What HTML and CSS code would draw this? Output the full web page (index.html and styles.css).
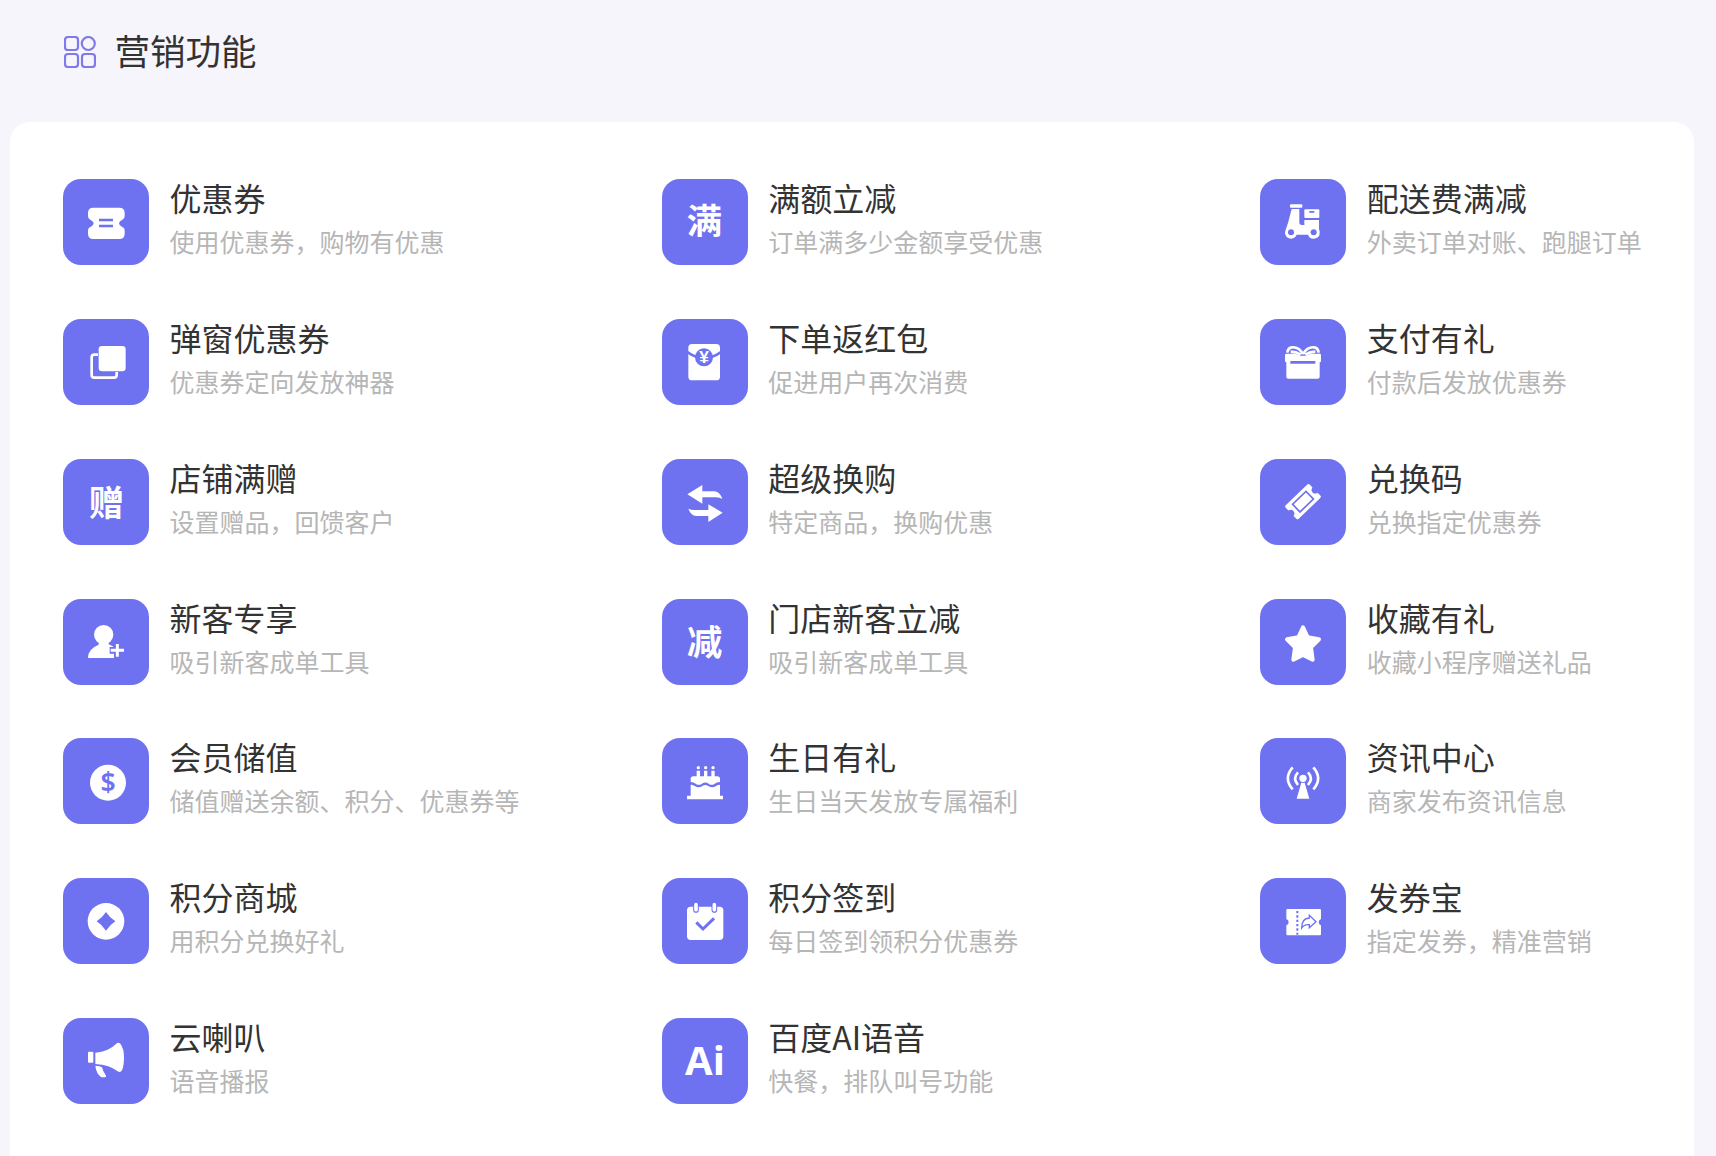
FILE: index.html
```html
<!DOCTYPE html>
<html lang="zh-CN">
<head>
    <meta charset="UTF-8">
    <meta name="viewport" content="width=device-width, initial-scale=1.0">
    <title>营销功能</title>
    <link rel="stylesheet" href="styles.css">
</head>
<body>

    <header class="header">
        <svg class="header-icon" viewBox="0 0 32 32">
            <rect x="1" y="1" width="13" height="13" rx="3" />
            <circle cx="24.3" cy="7.5" r="6.5" />
            <rect x="1" y="18" width="13" height="13" rx="3" />
            <rect x="18" y="18" width="13" height="13" rx="3" />
        </svg>
        <h1>营销功能</h1>
    </header>

    <main class="panel">

        <div class="item">
            <!-- Coupon -->
            <svg class="icon" viewBox="0 0 258 258">
                <path d="M91 86H169Q185 86 185 102V112Q185 119 178 122Q168 127 168 133Q168 139 178 144Q185 147 185 154V164Q185 180 169 180H91Q75 180 75 164V154Q75 147 82 144Q92 139 92 133Q92 127 82 122Q75 119 75 112V102Q75 86 91 86Z" />
                <path class="cut" d="M108 119H150V127H108ZM108 137H150V145H108Z" />
            </svg>
            <div class="info">
                <h3>优惠券</h3>
                <p>使用优惠券，购物有优惠</p>
            </div>
        </div>

        <div class="item">
            <svg class="icon" viewBox="0 0 258 258">
                <text class="glyph" x="127" y="166">满</text>
            </svg>
            <div class="info">
                <h3>满额立减</h3>
                <p>订单满多少金额享受优惠</p>
            </div>
        </div>

        <div class="item">
            <!-- Scooter -->
            <svg class="icon" viewBox="0 0 258 258">
                <rect x="90" y="76" width="37" height="10" rx="3" />
                <path d="M95 90H118V130Q118 138 126 138H133V123H177V150Q179 155 179 160A18 18 0 0 1 144 167H110A18 18 0 1 1 76 155L84 132Z" />
                <rect x="133" y="91" width="45" height="26" rx="3" />
                <circle class="cut" cx="93" cy="160" r="9" />
                <circle class="cut" cx="161" cy="160" r="9" />
                <path class="cut" d="M148 96H163V101H148Z" />
            </svg>
            <div class="info">
                <h3>配送费满减</h3>
                <p>外卖订单对账、跑腿订单</p>
            </div>
        </div>

        <div class="item">
            <!-- Stacked windows -->
            <svg class="icon" viewBox="0 0 258 258">
                <rect class="line" x="86" y="107" width="75" height="69" rx="8" />
                <rect x="105" y="79" width="85" height="80" rx="11" class="cut" />
                <rect x="107" y="81" width="81" height="76" rx="10" />
            </svg>
            <div class="info">
                <h3>弹窗优惠券</h3>
                <p>优惠券定向发放神器</p>
            </div>
        </div>

        <div class="item">
            <!-- Red packet -->
            <svg class="icon" viewBox="0 0 258 258">
                <rect x="79" y="75" width="95" height="109" rx="11" />
                <path class="cut-line" d="M76 99Q98 116 126 117Q155 116 177 99" />
                <circle class="cut" cx="126" cy="115" r="27" />
                <text class="yuan" x="126" y="133">¥</text>
            </svg>
            <div class="info">
                <h3>下单返红包</h3>
                <p>促进用户再次消费</p>
            </div>
        </div>

        <div class="item">
            <!-- Gift box -->
            <svg class="icon" viewBox="0 0 258 258">
                <path class="line" d="M129 105Q116 83 96 85Q84 86 82 101M129 105Q142 83 162 85Q174 86 176 101M92 98Q108 98 122 107M166 98Q150 98 136 107" />
                <path d="M79 104H105L122 110H136L153 104H179Q183 104 183 108V126Q183 130 179 130V173Q179 179 173 179H85Q79 179 79 173V130Q75 130 75 126V108Q75 104 79 104Z" />
                <path class="cut" d="M91 126H166V134H91Z" />
            </svg>
            <div class="info">
                <h3>支付有礼</h3>
                <p>付款后发放优惠券</p>
            </div>
        </div>

        <div class="item">
            <svg class="icon" viewBox="0 0 258 258">
                <text class="glyph" x="130" y="172">赠</text>
            </svg>
            <div class="info">
                <h3>店铺满赠</h3>
                <p>设置赠品，回馈客户</p>
            </div>
        </div>

        <div class="item">
            <!-- Exchange arrows -->
            <svg class="icon" viewBox="0 0 258 258">
                <path d="M76 106L121 78V97H158Q174 99 181 120Q174 115 163 115H121V134Z" />
                <path d="M182 161L139 189V171H103Q86 169 79 149Q87 153 98 153H139V136Z" />
            </svg>
            <div class="info">
                <h3>超级换购</h3>
                <p>特定商品，换购优惠</p>
            </div>
        </div>

        <div class="item">
            <!-- Tilted ticket -->
            <svg class="icon" viewBox="0 0 258 258">
                <g transform="rotate(-44 129 128)">
                    <path d="M84 100H174Q179 100 179 105V117Q169 119 169 128Q169 137 179 139V151Q179 156 174 156H84Q79 156 79 151V139Q89 137 89 128Q89 119 79 117V105Q79 100 84 100Z" />
                    <rect class="cut-line" x="101" y="112" width="56" height="32" stroke-width="5" />
                </g>
            </svg>
            <div class="info">
                <h3>兑换码</h3>
                <p>兑换指定优惠券</p>
            </div>
        </div>

        <div class="item">
            <!-- New customer -->
            <svg class="icon" viewBox="0 0 258 258">
                <ellipse cx="122" cy="107" rx="29" ry="29" />
                <path d="M107 128H137V136Q150 141 159 149V177H75Q74 150 107 137Z" />
                <path class="cut-line" d="M163 131V177M140 154H186" stroke-width="20" />
                <path class="line" d="M163 135V173M143 154H183" stroke-width="9" />
            </svg>
            <div class="info">
                <h3>新客专享</h3>
                <p>吸引新客成单工具</p>
            </div>
        </div>

        <div class="item">
            <svg class="icon" viewBox="0 0 258 258">
                <text class="glyph" x="128" y="168">减</text>
            </svg>
            <div class="info">
                <h3>门店新客立减</h3>
                <p>吸引新客成单工具</p>
            </div>
        </div>

        <div class="item">
            <!-- Star -->
            <svg class="icon" viewBox="0 0 258 258">
                <path class="round" d="M129 85L143 115L177 121L153 145L158 182L129 168L100 182L105 145L81 121L115 115Z" />
            </svg>
            <div class="info">
                <h3>收藏有礼</h3>
                <p>收藏小程序赠送礼品</p>
            </div>
        </div>

        <div class="item">
            <!-- Dollar coin -->
            <svg class="icon" viewBox="0 0 258 258">
                <circle cx="135" cy="134" r="54" />
                <text class="dollar" x="135" y="163">$</text>
            </svg>
            <div class="info">
                <h3>会员储值</h3>
                <p>储值赠送余额、积分、优惠券等</p>
            </div>
        </div>

        <div class="item">
            <!-- Birthday cake -->
            <svg class="icon" viewBox="0 0 258 258">
                <path d="M104 98H114V115H126V98H136V115H148V98H158V115H166Q174 115 174 123V132Q164 132 158 137Q149 144 140 137Q130 130 120 137Q110 144 101 137Q95 132 86 132V123Q86 115 94 115H104Z" />
                <path d="M86 140Q93 140 98 144Q110 152 121 144Q130 138 139 144Q151 152 162 144Q167 140 174 140V173H183V184H75V173H86Z" />
                <circle cx="109" cy="89" r="5" />
                <circle cx="131" cy="89" r="5" />
                <circle cx="153" cy="89" r="5" />
            </svg>
            <div class="info">
                <h3>生日有礼</h3>
                <p>生日当天发放专属福利</p>
            </div>
        </div>

        <div class="item">
            <!-- Broadcast tower -->
            <svg class="icon" viewBox="0 0 258 258">
                <circle cx="129" cy="121" r="11" />
                <path d="M124 134H134L148 182H110Z" />
                <path class="line" d="M114 103Q97 121 114 141M144 103Q161 121 144 141M98 88Q69 121 98 154M160 88Q189 121 160 154" />
            </svg>
            <div class="info">
                <h3>资讯中心</h3>
                <p>商家发布资讯信息</p>
            </div>
        </div>

        <div class="item">
            <!-- Points coin -->
            <svg class="icon" viewBox="0 0 258 258">
                <circle cx="129" cy="130" r="55" />
                <path class="cut" d="M129 102Q140 119 157 130Q140 141 129 158Q118 141 101 130Q118 119 129 102Z" />
            </svg>
            <div class="info">
                <h3>积分商城</h3>
                <p>用积分兑换好礼</p>
            </div>
        </div>

        <div class="item">
            <!-- Calendar -->
            <svg class="icon" viewBox="0 0 258 258">
                <rect x="75" y="86" width="109" height="100" rx="11" />
                <path class="cut-line" d="M102 80V96M157 80V96" stroke-width="17" stroke-linecap="round" />
                <path class="line" d="M102 80V95M157 80V95" stroke-width="11" stroke-linecap="round" />
                <path class="cut-line" d="M103 133L123 153L156 121" stroke-width="9" />
            </svg>
            <div class="info">
                <h3>积分签到</h3>
                <p>每日签到领积分优惠券</p>
            </div>
        </div>

        <div class="item">
            <!-- Send coupon -->
            <svg class="icon" viewBox="0 0 258 258">
                <path d="M82 93H180Q183 93 183 96V123A10 10 0 0 0 183 142V169Q183 172 180 172H82Q79 172 79 169V142A10 10 0 0 0 79 123V96Q79 93 82 93Z" />
                <path class="cut-line" d="M112 99V170" stroke-width="6" stroke-dasharray="7 6" />
                <path class="cut-line" d="M125 150Q125 121 148 120V112L168 131L148 149V140Q133 138 125 150Z" stroke-width="4" />
            </svg>
            <div class="info">
                <h3>发券宝</h3>
                <p>指定发券，精准营销</p>
            </div>
        </div>

        <div class="item">
            <!-- Megaphone -->
            <svg class="icon" viewBox="0 0 258 258">
                <rect x="75" y="101" width="16" height="33" rx="3" />
                <path d="M97 104Q136 101 160 77Q166 71 172 77Q183 91 183 118Q183 144 177 157Q172 165 164 160Q141 141 97 138Z" />
                <path d="M97 143Q110 143 117 148Q119 159 129 173Q131 178 125 178H115Q99 166 97 143Z" />
            </svg>
            <div class="info">
                <h3>云喇叭</h3>
                <p>语音播报</p>
            </div>
        </div>

        <div class="item">
            <svg class="icon" viewBox="0 0 258 258">
                <text class="ai" x="129" y="172">Ai</text>
            </svg>
            <div class="info">
                <h3>百度AI语音</h3>
                <p>快餐，排队叫号功能</p>
            </div>
        </div>

    </main>

</body>
</html>
```
FILE: styles.css
```css
/* General Styles */
* {
    box-sizing: border-box;
}

body {
    font-family: 'Noto Sans CJK SC', sans-serif;
    margin: 0;
    background-color: #f5f5fb;
    color: #333;
}

h1,
h3,
p {
    margin: 0;
    font-weight: 400;
    white-space: nowrap;
}

/* Page header */
.header {
    display: flex;
    align-items: center;
    gap: 19px;
    height: 122px;
    padding: 0 0 18px 63.5px;
}

.header-icon {
    width: 32px;
    height: 32px;
    fill: none;
    stroke: #8079ea;
    stroke-width: 2.2;
}

h1 {
    margin-bottom: 4px;
    font-size: 35.5px;
    line-height: 52px;
}

/* Feature list */
.panel {
    display: grid;
    grid-template-columns: 598.7px 598.5px 1fr;
    grid-auto-rows: 86px;
    row-gap: 53.8px;
    height: 1034px;
    margin: 0 22px 0 10px;
    padding: 57.2px 0 0 53.2px;
    background-color: #fff;
    border-radius: 20px 20px 0 0;
}

.item {
    display: flex;
    gap: 20.4px;
}

.info h3 {
    margin-top: -3px;
    font-size: 32px;
    line-height: 42px;
}

.info p {
    margin-top: 2px;
    font-size: 25px;
    line-height: 42px;
    color: #b6b6b6;
}

/* Icons */
.icon {
    flex: none;
    width: 86px;
    height: 86px;
    background-color: #6e71f0;
    border-radius: 18px;
    fill: #fff;
}

.icon .cut {
    fill: #6e71f0;
}

.icon .line {
    fill: none;
    stroke: #fff;
}

.icon .cut-line {
    fill: none;
    stroke: #6e71f0;
}

.icon .line:not([stroke-width]),
.icon .cut-line:not([stroke-width]) {
    stroke-width: 8px;
}

.icon .round {
    stroke: #fff;
    stroke-width: 12px;
    stroke-linejoin: round;
}

.icon text {
    font-weight: 700;
    text-anchor: middle;
}

.icon .glyph {
    font-size: 106px;
}

.icon .yuan {
    font-family: 'Liberation Sans', sans-serif;
    font-size: 52px;
}

.icon .dollar {
    font-family: 'Noto Sans', sans-serif;
    font-size: 80px;
    font-weight: 600;
    fill: #6e71f0;
}

.icon .ai {
    font-family: 'Open Sans', sans-serif;
    font-size: 120px;
}
```
